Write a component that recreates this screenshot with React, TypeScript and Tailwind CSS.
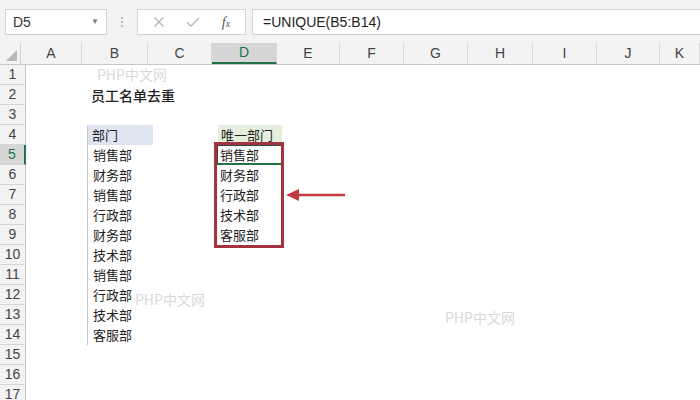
import React from 'react';

const cols = [
  { name: 'A', w: 'w-[61px]' },
  { name: 'B', w: 'w-[66px]' },
  { name: 'C', w: 'w-[64px]' },
  { name: 'D', w: 'w-[65px]' },
  { name: 'E', w: 'w-[63px]' },
  { name: 'F', w: 'w-[64px]' },
  { name: 'G', w: 'w-[64px]' },
  { name: 'H', w: 'w-[65px]' },
  { name: 'I', w: 'w-[64px]' },
  { name: 'J', w: 'w-[63px]' },
  { name: 'K', w: 'w-[40px]' },
];

const deptList = ['销售部', '财务部', '销售部', '行政部', '财务部', '技术部', '销售部', '行政部', '技术部', '客服部'];
const uniqueList = ['销售部', '财务部', '行政部', '技术部', '客服部'];

const cjk = "font-['Noto_Sans_CJK_SC',sans-serif]";

const Watermark = ({ className }: { className: string }) => (
  <div className={`absolute text-[14px] text-[#d9d9d9] pointer-events-none whitespace-nowrap ${cjk} ${className}`}>
    PHP中文网
  </div>
);

export default function App() {
  const rows = Array.from({ length: 17 }, (_, i) => i + 1);

  const cellContent = (row: number, col: string) => {
    if (col === 'B') {
      if (row === 2) return <span className="text-[14px] font-medium pl-[4px] whitespace-nowrap">员工名单去重</span>;
      if (row === 4) return <div className="h-full bg-[#dfe4f1] pl-[4px] flex items-center">部门</div>;
      if (row >= 5 && row <= 14) return <span className="pl-[5px]">{deptList[row - 5]}</span>;
    }
    if (col === 'D') {
      if (row === 4) return <div className="h-full bg-[#e3efdc] pl-[3px] flex items-center">唯一部门</div>;
      if (row === 5)
        return (
          <div className="h-full border border-[#2d4a3a] border-b-2 border-b-[#217346] pl-[2px] flex items-center">
            {uniqueList[0]}
          </div>
        );
      if (row >= 6 && row <= 9) return <span className="pl-[3px]">{uniqueList[row - 5]}</span>;
    }
    return null;
  };

  return (
    <div className="relative w-[700px] h-[400px] overflow-hidden bg-white font-['Liberation_Sans',sans-serif]">
      {/* formula bar */}
      <div className="h-[43px] bg-[#f3f3f3] flex items-center pt-[1px]">
        <div className="ml-[5px] w-[102px] h-[26px] bg-white border border-[#d4d4d4] flex items-center justify-between px-[7px]">
          <span className="text-[14px] text-[#333]">D5</span>
          <span className="text-[8px] text-[#777]">▼</span>
        </div>
        <div className="w-[30px] flex flex-col items-center gap-[2px]">
          <span className="w-[2px] h-[2px] bg-[#bbb]" />
          <span className="w-[2px] h-[2px] bg-[#bbb]" />
          <span className="w-[2px] h-[2px] bg-[#bbb]" />
        </div>
        <div className="w-[109px] h-[26px] bg-white border border-[#d4d4d4] flex items-center justify-around px-[4px]">
          <svg width="12" height="12" viewBox="0 0 12 12" className="text-[#b5b5b5]">
            <path d="M1.5 1.5 L10.5 10.5 M10.5 1.5 L1.5 10.5" stroke="currentColor" strokeWidth="1.2" />
          </svg>
          <svg width="14" height="12" viewBox="0 0 14 12" className="text-[#b5b5b5]">
            <path d="M1 6.5 L5 10 L13 2" stroke="currentColor" strokeWidth="1.3" fill="none" />
          </svg>
          <span className="text-[14px] italic text-[#555] font-['Liberation_Serif',serif]">
            f<span className="text-[10px]">x</span>
          </span>
        </div>
        <div className="ml-[6px] flex-1 h-[26px] bg-white border border-[#d4d4d4] border-r-0 flex items-center pl-[10px]">
          <span className="text-[14px] text-[#222]">=UNIQUE(B5:B14)</span>
        </div>
      </div>

      {/* column headers */}
      <div className="h-[22px] flex bg-[#f3f3f3] border-b border-[#c8c8c8]">
        <div className="w-[26px] border-r border-[#d0d0d0] flex items-end justify-end p-[3px]">
          <svg width="11" height="11" viewBox="0 0 11 11">
            <path d="M11 0 L11 11 L0 11 Z" fill="#b8b8b8" />
          </svg>
        </div>
        {cols.map((c) => (
          <div
            key={c.name}
            className={`${c.w} shrink-0 border-r border-[#d8d8d8] flex items-center justify-center text-[14px] ${
              c.name === 'D' ? 'bg-[#d6d6d6] border-b-2 border-b-[#217346] text-[#217346]' : 'text-[#444]'
            }`}
          >
            {c.name}
          </div>
        ))}
      </div>

      {/* grid */}
      <div className={`flex flex-col text-[13px] text-[#222] ${cjk}`}>
        {rows.map((r) => (
          <div key={r} className="h-[20px] flex">
            <div
              className={`w-[26px] shrink-0 border-b border-[#d6d6d6] flex items-center justify-center text-[14px] font-['Liberation_Sans',sans-serif] ${
                r === 5
                  ? 'bg-[#d6d6d6] border-r-2 border-r-[#217346] text-[#217346]'
                  : 'bg-[#f3f3f3] border-r border-r-[#c8c8c8] text-[#444]'
              }`}
            >
              {r}
            </div>
            {cols.map((c) => (
              <div
                key={c.name}
                className={`${c.w} shrink-0 h-full flex flex-col justify-center ${
                  c.name === 'B' && r >= 4 && r <= 14 ? 'border-l border-[#c8c8c8]' : ''
                } ${c.name === 'D' && r === 4 ? 'pl-[1px]' : ''}`}
              >
                {cellContent(r, c.name)}
              </div>
            ))}
          </div>
        ))}
      </div>

      {/* highlight box around the result */}
      <div className="absolute left-[214px] top-[142px] w-[70px] h-[106px] border-[3px] border-[#a3343f]" />
      <svg className="absolute left-[285px] top-[187px]" width="62" height="16" viewBox="0 0 62 16">
        <path d="M12 8 L60 8" stroke="#c23a40" strokeWidth="2.5" />
        <path d="M1 8 L14 2 L14 14 Z" fill="#c23a40" />
      </svg>

      <Watermark className="left-[97px] top-[64px]" />
      <Watermark className="left-[135px] top-[289px]" />
      <Watermark className="left-[445px] top-[307px]" />
    </div>
  );
}
